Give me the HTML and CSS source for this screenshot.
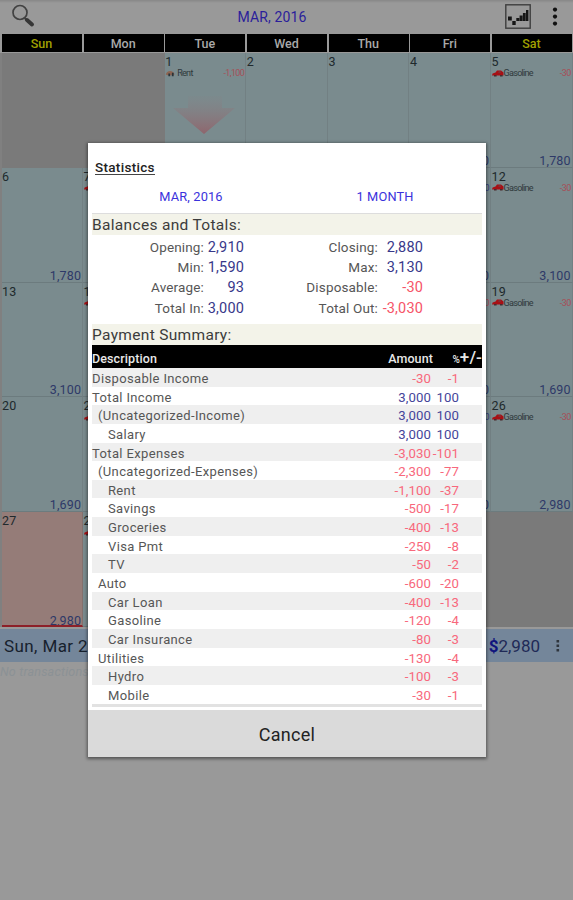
FILE: index.html
```html
<!DOCTYPE html>
<html lang="en">
<head>
<meta charset="utf-8">
<title>Statistics</title>
<link rel="stylesheet" href="styles.css">
</head>
<body>
<svg class="defs" width="0" height="0" aria-hidden="true">
  <symbol id="car" viewBox="0 0 12 7"><path d="M0 5.4 L.6 3.4 L3.5 2.6 L5 .4 H9 L11.5 2.6 V5.4 H0Z" fill="#a80f14"/><path d="M6 2.4 6.8 1.4H8.4L9.2 2.4Z" fill="#604b52"/><path d="M2 5h2.6v1.6H2zM8 5h2.6v1.6H8z" fill="#4a2a2d"/></symbol>
</svg>
<div class="screen">
  <header class="topbar">
    <svg class="search" viewBox="0 0 26 24"><circle cx="9" cy="8.5" r="7" fill="none" stroke="#424242" stroke-width="1.7"/><path d="M13.5 14 L16 16.2" stroke="#424242" stroke-width="2"/><path d="M16 16 L21 20.4" stroke="#363636" stroke-width="4" stroke-linecap="round"/></svg>
    <div class="month">MAR, 2016</div>
    <svg class="chart" viewBox="0 0 26 25"><rect x=".8" y=".8" width="24.4" height="23.4" fill="none" stroke="#3e3e3e" stroke-width="1.4"/><path d="M3 12.5h3.8v4H3zM7.3 17h3.4v4H7.300zM11.300 14h3v3h-3zM14.600 11.500h3V17h-3zM17.900 9h2.800v8h-2.800zM21 6h2.400v11h-2.400z" fill="#161616"/></svg>
    <svg class="more" viewBox="0 0 6 20"><circle cx="3" cy="2.600" r="2.100"/><circle cx="3" cy="9.600" r="2.100"/><circle cx="3" cy="16.600" r="2.100"/></svg>
  </header>
  <div class="weekdays">
    <div class="weekend">Sun</div><div>Mon</div><div>Tue</div><div>Wed</div><div>Thu</div><div>Fri</div><div class="weekend">Sat</div>
  </div>
  <div class="calendar">
    <div class="cell out"></div><div class="cell out"></div>
    <div class="cell"><b>1</b><p><svg class="ico" viewBox="0 0 12 8"><path d="M0 5Q1 1 5 1Q9 1 10 5L8 6H2Z" fill="#8d6552"/><path d="M3 4h2v3H3zM7 3h2v4H7z" fill="#28343a"/></svg><span>Rent</span><i>-1,100</i></p>
      <svg class="arrow" viewBox="0 0 62 38"><defs><linearGradient id="fade" x1="0" y1="0" x2="0" y2="1"><stop offset="0" stop-color="#8a8083" stop-opacity=".1"/><stop offset="1" stop-color="#90636b" stop-opacity=".95"/></linearGradient></defs><path d="M15 0H49V12H62L31 38L0 12H15Z" fill="url(#fade)"/></svg></div>
    <div class="cell"><b>2</b></div><div class="cell"><b>3</b></div>
    <div class="cell"><b>4</b><em>0</em></div>
    <div class="cell"><b>5</b><p><svg class="ico"><use href="#car"/></svg><span>Gasoline</span><i>-30</i></p><em>1,780</em></div>

    <div class="cell"><b>6</b><em>1,780</em></div><div class="cell"><b>7</b><p><svg class="ico"><use href="#car"/></svg></p></div>
    <div class="cell"></div><div class="cell"></div><div class="cell"></div>
    <div class="cell"><b></b><p><i class="in">0</i></p><em>0</em></div>
    <div class="cell"><b>12</b><p><svg class="ico"><use href="#car"/></svg><span>Gasoline</span><i>-30</i></p><em>3,100</em></div>

    <div class="cell"><b>13</b><em>3,100</em></div><div class="cell"><b>14</b><p><svg class="ico"><use href="#car"/></svg></p></div>
    <div class="cell"></div><div class="cell"></div><div class="cell"></div>
    <div class="cell"><b></b><p><i>0</i></p><em>0</em></div>
    <div class="cell"><b>19</b><p><svg class="ico"><use href="#car"/></svg><span>Gasoline</span><i>-30</i></p><em>1,690</em></div>

    <div class="cell"><b>20</b><em>1,690</em></div><div class="cell"><b>21</b><p><svg class="ico"><use href="#car"/></svg></p></div>
    <div class="cell"></div><div class="cell"></div><div class="cell"></div>
    <div class="cell"><b></b><p><i class="in">0</i></p><em>0</em></div>
    <div class="cell"><b>26</b><p><svg class="ico"><use href="#car"/></svg><span>Gasoline</span><i>-30</i></p><em>2,980</em></div>

    <div class="cell today"><b>27</b><em>2,980</em></div><div class="cell"><b>28</b><p><svg class="ico"><use href="#car"/></svg></p></div>
    <div class="cell"></div><div class="cell"></div><div class="cell"></div><div class="cell out"></div><div class="cell out"></div>
  </div>
  <div class="daybar">
    <div class="day">Sun, Mar 27</div>
    <div class="balance"><strong>$</strong>2,980</div>
    <svg class="daymore" viewBox="0 0 4 12"><path d="M.5 0h2.6v2.4H.5zM.5 4.5h2.6v2.4H.5zM.5 9h2.6v2.4H.5z" fill="#2e353d"/></svg>
  </div>
  <div class="empty">No transactions</div>

  <section class="dialog">
    <h1><span>Statistics</span></h1>
    <div class="period"><div>MAR, 2016</div><div>1 MONTH</div></div>
    <h2>Balances and Totals:</h2>
    <div class="totals">
      <span>Opening:</span><span class="num">2,910</span><span>Closing:</span><span class="num">2,880</span>
      <span>Min:</span><span class="num">1,590</span><span>Max:</span><span class="num">3,130</span>
      <span>Average:</span><span class="num">93</span><span>Disposable:</span><span class="num neg">-30</span>
      <span>Total In:</span><span class="num">3,000</span><span>Total Out:</span><span class="num neg">-3,030</span>
    </div>
    <h2>Payment Summary:</h2>
    <div class="thead"><span>Description</span><span class="amt">Amount</span><span class="pct"><small>%</small>+/-</span></div>
    <div class="rows">
      <div class="row neg"><span>Disposable Income</span><span>-30</span><span>-1</span></div>
      <div class="row"><span>Total Income</span><span>3,000</span><span>100</span></div>
      <div class="row l1"><span>(Uncategorized-Income)</span><span>3,000</span><span>100</span></div>
      <div class="row l2"><span>Salary</span><span>3,000</span><span>100</span></div>
      <div class="row neg"><span>Total Expenses</span><span>-3,030</span><span>-101</span></div>
      <div class="row neg l1"><span>(Uncategorized-Expenses)</span><span>-2,300</span><span>-77</span></div>
      <div class="row neg l2"><span>Rent</span><span>-1,100</span><span>-37</span></div>
      <div class="row neg l2"><span>Savings</span><span>-500</span><span>-17</span></div>
      <div class="row neg l2"><span>Groceries</span><span>-400</span><span>-13</span></div>
      <div class="row neg l2"><span>Visa Pmt</span><span>-250</span><span>-8</span></div>
      <div class="row neg l2"><span>TV</span><span>-50</span><span>-2</span></div>
      <div class="row neg l1"><span>Auto</span><span>-600</span><span>-20</span></div>
      <div class="row neg l2"><span>Car Loan</span><span>-400</span><span>-13</span></div>
      <div class="row neg l2"><span>Gasoline</span><span>-120</span><span>-4</span></div>
      <div class="row neg l2"><span>Car Insurance</span><span>-80</span><span>-3</span></div>
      <div class="row neg l1"><span>Utilities</span><span>-130</span><span>-4</span></div>
      <div class="row neg l2"><span>Hydro</span><span>-100</span><span>-3</span></div>
      <div class="row neg l2"><span>Mobile</span><span>-30</span><span>-1</span></div>
    </div>
    <div class="end"></div>
    <button>Cancel</button>
  </section>
</div>
</body>
</html>
```

FILE: styles.css
```css
* { box-sizing: border-box; }
body { margin: 0; font-family: Roboto, "Liberation Sans", sans-serif; }
.defs { position: absolute; }
.screen { position: relative; width: 573px; height: 900px; overflow: hidden; background: #999; display: flex; flex-direction: column; }

.topbar { height: 33px; flex: none; display: flex; align-items: center; background: linear-gradient(#878787 0, #999 3px); padding: 0 14px 0 11px; }
.search { width: 26px; height: 24px; margin-top: -1px; }
.month { width: 470px; text-align: center; font-size: 14px; letter-spacing: .15px; color: #2b1e9b; }
.chart { width: 26px; height: 25px; margin: 0 0 0 -2px; flex: none; }
.more { width: 6px; height: 20px; margin-left: 21px; flex: none; fill: #111; }

.weekdays { height: 20px; flex: none; display: grid; grid-template-columns: repeat(7, 1fr); gap: 1.6px; padding: 1px 1px 1px 2px; background: #999; }
.weekdays div { background: #000; color: #a9a9a9; text-align: center; font-size: 12.5px; font-weight: 500; line-height: 20px; padding-right: 1px; overflow: hidden; }
.weekdays .weekend { color: #a0a000; }

.calendar { height: 574px; flex: none; display: grid; grid-template-columns: repeat(7, 81.6px); grid-template-rows: repeat(5, 1fr); padding-left: 1.5px; background: #808080; }
.cell { background: #7a8b8e; border-right: 1px solid #728083; border-bottom: 1px solid #6c7b7e; padding: 1px 1px 0 .5px; overflow: hidden; display: flex; flex-direction: column; }
.cell.out { background: #7a7a7a; border-color: #7a7a7a; }
.cell.today { background: #957c78; border-bottom: 2px solid #8d2028; border-right-color: #83706d; }
.cell b { height: 14px; flex: none; font-weight: 400; font-size: 12.5px; line-height: 16px; color: #20292c; letter-spacing: .1px; }
.cell p { margin: 0; height: 10px; display: flex; align-items: center; line-height: 10px; color: #2f393c; }
.cell p span { font-size: 9px; letter-spacing: -.7px; }
.cell i { margin-left: auto; font-style: normal; font-size: 9px; letter-spacing: -.6px; color: #a64f58; }
.cell i.in { color: #34407c; }
.cell em { margin: auto 0 0; text-align: right; font-style: normal; font-size: 12.5px; line-height: 13px; letter-spacing: .15px; color: #2e3968; }
.cell.today em { margin-bottom: -2px; }
.ico { width: 12px; height: 7px; flex: none; }
.arrow { width: 62px; height: 38px; margin: 18px 0 0 8px; }

.daybar { height: 33px; flex: none; margin-top: 2px; background: #74869a; display: flex; align-items: center; padding: 1px 13px 0 4px; font-size: 17px; color: #17212d; }
.day { flex: 1; letter-spacing: .4px; }
.balance { color: #1f2a57; }
.balance strong { color: #10147d; }
.daymore { width: 4px; height: 12px; margin-left: 16px; }
.empty { font-size: 12.5px; font-style: italic; color: #8b9195; line-height: 20px; letter-spacing: .2px; }

.dialog { position: absolute; left: 88px; top: 143px; width: 398px; height: 614px; background: #fff; box-shadow: 0 1px 3px 1px rgba(0,0,0,.45); display: flex; flex-direction: column; color: #565656; padding: 0 4px; }
h1 { margin: 0; height: 43px; padding: 15px 3px 0; font-size: 13.5px; line-height: 18px; font-weight: 500; color: #222; letter-spacing: .3px; }
h1 span { border-bottom: 1px solid #444; display: inline-block; height: 17px; }
.period { flex: none; display: grid; grid-template-columns: 1fr 1fr; height: 28px; text-align: center; font-size: 12.8px; line-height: 22px; letter-spacing: .15px; color: #3a32dc; border-bottom: 1px solid #ddd; padding-left: 2px; }
h2 { margin: 0; height: 21px; flex: none; background: #f3f3e9; font-size: 15.5px; line-height: 23px; font-weight: 400; letter-spacing: .32px; color: #3c3c3c; }
.totals { height: 89px; flex: none; padding-top: 2px; display: grid; grid-template-columns: 112px 40px 134px 45px; grid-auto-rows: 20.2px; text-align: right; font-size: 13.5px; line-height: 21px; letter-spacing: .15px; }
.totals .num { color: #38388a; font-size: 14.5px; white-space: nowrap; }
.totals .num.neg { color: #f65468; }
.thead { height: 23px; flex: none; background: #000; color: #e8e8e8; display: flex; font-size: 12.5px; line-height: 28px; font-weight: 500; letter-spacing: .1px; overflow: hidden; }
.thead .amt { margin-left: auto; width: 60px; text-align: right; }
.thead .pct { width: 49px; text-align: right; font-size: 17px; line-height: 25px; white-space: nowrap; }
.thead small { font-size: 10px; }
.rows { flex: none; }
.row { height: 18.65px; display: grid; grid-template-columns: 1fr 80px 28px; padding-right: 23px; font-size: 13px; line-height: 21px; letter-spacing: .36px; }
.row:nth-child(odd) { background: #efefef; }
.row span + span { text-align: right; color: #45459a; font-size: 13.2px; letter-spacing: .1px; white-space: nowrap; }
.row.neg span + span { color: #f8687c; }
.l1 span:first-child { padding-left: 6px; }
.l2 span:first-child { padding-left: 16px; }
.end { height: 3px; flex: none; background: #e2e2e2; }
button { height: 47px; flex: none; margin: auto -4px 0; border: 0; background: #dadada; color: #222; font: 400 18px Roboto, "Liberation Sans", sans-serif; letter-spacing: .3px; padding-top: 3px; }
```
